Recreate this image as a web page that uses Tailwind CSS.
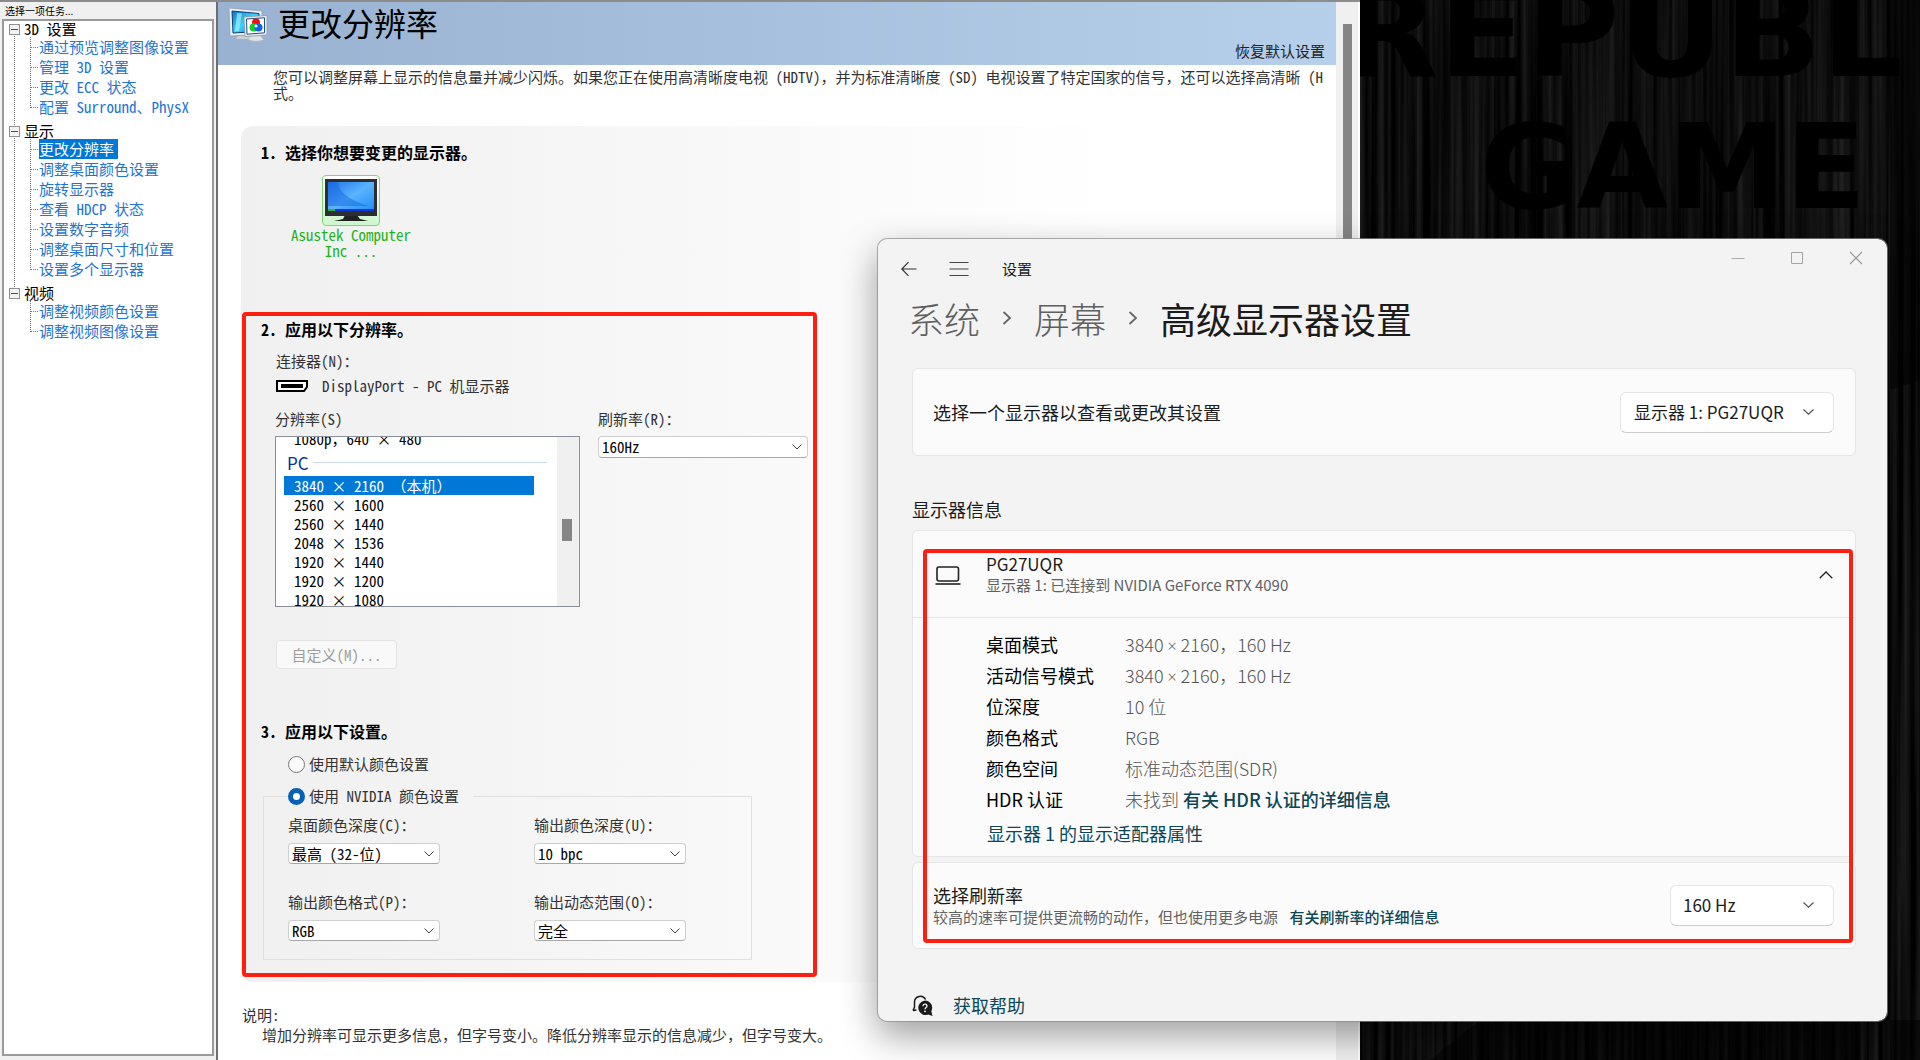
<!DOCTYPE html>
<html lang="zh-CN">
  <head>
    <meta charset="UTF-8" />
    <meta name="viewport" content="width=device-width, initial-scale=1.0" />
    <title>更改分辨率</title>
    <script src="https://cdn.jsdelivr.net/npm/@tailwindcss/browser@4"></script>
  </head>
  <body class="relative h-screen overflow-hidden bg-black font-['Noto_Sans_CJK_SC',sans-serif]">
    <!-- wallpaper -->
    <div class="absolute inset-y-0 right-0 w-[560px] overflow-hidden">
      <svg class="absolute inset-0 h-full w-full" aria-hidden="true">
        <filter id="streaks" x="0" y="0" width="100%" height="100%" color-interpolation-filters="sRGB">
          <feTurbulence type="fractalNoise" baseFrequency="0.16 0.002" numOctaves="3" seed="4" />
          <feColorMatrix values="0.22 0 0 0 -0.058  0.22 0 0 0 -0.058  0.22 0 0 0 -0.058  0 0 0 0 1" />
        </filter>
        <rect width="100%" height="100%" filter="url(#streaks)" />
        <path d="M530 0h30v1060h-30zM560 380 500 400V1060H560ZM70 1060 120 1020H560V1060Z" fill="#000" fill-opacity=".5" />
      </svg>
      <div class="absolute -top-8 -left-5 font-['DejaVu_Sans',sans-serif] text-[128px] leading-[128px] font-bold whitespace-nowrap text-black">REPUBL</div>
      <div class="absolute top-[108px] left-[120px] font-['DejaVu_Sans',sans-serif] text-[118px] leading-[118px] font-bold whitespace-nowrap text-black">GAME</div>
    </div>

    <!-- NVIDIA control panel -->
    <div class="absolute inset-y-0 right-[560px] left-0 flex overflow-hidden border-t-2 border-[#8c8c8c] bg-[#f0f0f0] font-['Noto_Sans_Mono_CJK_SC','Noto_Sans_CJK_SC',monospace] text-[15px] text-[#333]">
      <nav class="flex w-[216px] shrink-0 flex-col pr-[2px] pb-1 pl-[2px]">
        <h2 class="pl-[3px] font-['Noto_Sans_CJK_SC',sans-serif] text-[10px] leading-[17px] text-black">选择一项任务...</h2>
        <div class="relative flex grow flex-col gap-1.5 border-2 border-[#9a9a9a] bg-white leading-5 text-[#1f74d4]">
          <div class="absolute top-3 left-[10px] h-[264px] border-l border-dotted border-[#777]"></div>
          <section>
            <h3 class="relative flex h-4 items-center pl-[5px] text-black"><span class="mr-1 flex size-[11px] items-center justify-center border border-[#919191] bg-[#f4f4f4]"><i class="h-px w-[7px] bg-[#2b4f9e]"></i></span>3D 设置</h3>
            <ul class="relative ml-[26px] before:absolute before:top-0 before:bottom-[9px] before:left-0 before:border-l before:border-dotted before:border-[#777]">
              <li class="flex h-5 items-center"><i class="mr-px w-2 border-t border-dotted border-[#777]"></i><a href="#">通过预览调整图像设置</a></li>
              <li class="flex h-5 items-center"><i class="mr-px w-2 border-t border-dotted border-[#777]"></i><a href="#">管理 3D 设置</a></li>
              <li class="flex h-5 items-center"><i class="mr-px w-2 border-t border-dotted border-[#777]"></i><a href="#">更改 ECC 状态</a></li>
              <li class="flex h-5 items-center"><i class="mr-px w-2 border-t border-dotted border-[#777]"></i><a href="#" class="whitespace-nowrap">配置 Surround、PhysX</a></li>
            </ul>
          </section>
          <section>
            <h3 class="relative flex h-4 items-center pl-[5px] text-black"><span class="mr-1 flex size-[11px] items-center justify-center border border-[#919191] bg-[#f4f4f4]"><i class="h-px w-[7px] bg-[#2b4f9e]"></i></span>显示</h3>
            <ul class="relative ml-[26px] before:absolute before:top-0 before:bottom-[9px] before:left-0 before:border-l before:border-dotted before:border-[#777]">
              <li class="flex h-5 items-center"><i class="mr-px w-2 border-t border-dotted border-[#777]"></i><a href="#" class="bg-[#0078d7] pr-1 text-white">更改分辨率</a></li>
              <li class="flex h-5 items-center"><i class="mr-px w-2 border-t border-dotted border-[#777]"></i><a href="#">调整桌面颜色设置</a></li>
              <li class="flex h-5 items-center"><i class="mr-px w-2 border-t border-dotted border-[#777]"></i><a href="#">旋转显示器</a></li>
              <li class="flex h-5 items-center"><i class="mr-px w-2 border-t border-dotted border-[#777]"></i><a href="#">查看 HDCP 状态</a></li>
              <li class="flex h-5 items-center"><i class="mr-px w-2 border-t border-dotted border-[#777]"></i><a href="#">设置数字音频</a></li>
              <li class="flex h-5 items-center"><i class="mr-px w-2 border-t border-dotted border-[#777]"></i><a href="#">调整桌面尺寸和位置</a></li>
              <li class="flex h-5 items-center"><i class="mr-px w-2 border-t border-dotted border-[#777]"></i><a href="#">设置多个显示器</a></li>
            </ul>
          </section>
          <section>
            <h3 class="relative flex h-4 items-center pl-[5px] text-black"><span class="mr-1 flex size-[11px] items-center justify-center border border-[#919191] bg-[#f4f4f4]"><i class="h-px w-[7px] bg-[#2b4f9e]"></i></span>视频</h3>
            <ul class="relative ml-[26px] before:absolute before:top-0 before:bottom-[9px] before:left-0 before:border-l before:border-dotted before:border-[#777]">
              <li class="flex h-5 items-center"><i class="mr-px w-2 border-t border-dotted border-[#777]"></i><a href="#">调整视频颜色设置</a></li>
              <li class="flex h-5 items-center"><i class="mr-px w-2 border-t border-dotted border-[#777]"></i><a href="#">调整视频图像设置</a></li>
            </ul>
          </section>
        </div>
      </nav>

      <main class="min-w-0 grow overflow-hidden border-l-2 border-[#6e6e6e] bg-white">
        <header class="flex h-[63px] bg-linear-to-r from-[#99b2d1] to-[#b6cfea] pr-[11px] pl-[10px]">
          <svg class="mt-1.5 h-[34px] w-10 shrink-0" viewBox="0 0 40 34" aria-hidden="true">
            <defs>
              <linearGradient id="screen" x1="0" y1="0" x2="1" y2="1"><stop offset="0" stop-color="#0a6fc8" /><stop offset=".5" stop-color="#3fd2f8" /><stop offset="1" stop-color="#0a7ad6" /></linearGradient>
            </defs>
            <path d="M10 28h12l2 3H8z" fill="#c9d0d6" />
            <path d="M1 0 34 3v23L2 28z" fill="#eef2f5" stroke="#8d99a5" stroke-width=".7" />
            <path d="M4 3 31 5.500v18L5 25z" fill="url(#screen)" stroke="#0b3d78" />
            <path d="M9 5 14 5.500 11 23l-4 .5z" fill="#9ff1ff" fill-opacity=".7" />
            <path d="m22 28 10-1 4 5q-8 3-16 0z" fill="#dfe3e6" stroke="#9aa" stroke-width=".5" />
            <path d="M16 9 39 7.500V27l-22 1.500z" fill="#e9edf0" stroke="#8792a0" stroke-width=".7" />
            <path d="M18.500 11 36.500 9.800v15l-17.500 1.400z" fill="#fff" stroke="#214f86" />
            <circle cx="28" cy="14.500" r="4" fill="#f01010" />
            <circle cx="25.500" cy="19.500" r="4" fill="#10d020" />
            <circle cx="30.500" cy="19.500" r="4" fill="#1560e8" />
            <circle cx="28" cy="18" r="1.500" fill="#fff" />
          </svg>
          <h1 class="ml-2.5 self-start text-[32px] leading-10 text-black">更改分辨率</h1>
          <button class="mb-1 ml-auto self-end leading-5 text-[#222]">恢复默认设置</button>
        </header>

        <p class="mt-1 pl-[55px] leading-4 whitespace-nowrap">您可以调整屏幕上显示的信息量并减少闪烁。如果您正在使用高清晰度电视 (HDTV)，并为标准清晰度 (SD) 电视设置了特定国家的信号，还可以选择高清晰 (H<br />式。</p>

        <div class="mt-[25px] ml-[23px] rounded-l-xl bg-linear-to-r from-[#f0f0f0] to-white to-80% pt-3.5 pb-[5px]">
          <h2 class="pl-5 text-base leading-6 font-bold text-black">1. 选择你想要变更的显示器。</h2>
          <button class="mt-[11px] ml-[49px] flex w-[122px] flex-col items-center leading-4 text-[#1cb41c]">
            <svg class="h-[51px] w-[58px] rounded-sm border border-[#7fd67a] bg-linear-to-b from-white to-[#ccf7cc]" viewBox="0 0 56 49" aria-hidden="true">
              <defs>
                <linearGradient id="desk" x1="0" y1="0" x2="1" y2="1"><stop offset="0" stop-color="#1f6fe8" /><stop offset=".5" stop-color="#5ab4ff" /><stop offset="1" stop-color="#1c8cf5" /></linearGradient>
              </defs>
              <path d="M22 39h12l3 4 8 2H11l9-2z" fill="#222" />
              <rect x="2" y="3" width="52" height="37" fill="#2b2e33" />
              <rect x="5" y="6" width="46" height="29" fill="url(#desk)" />
              <path d="M5 6h10q0 14 30 24H5z" fill="#1465dd" fill-opacity=".5" />
              <path d="M5 33h46v2H5z" fill="#1436d8" /><path d="M5 33h7v2H5z" fill="#2cb52c" />
            </svg>
            <span class="mt-px">Asustek Computer<br />Inc ...</span>
          </button>

          <div class="mt-[53px] ml-px w-[575px] rounded-sm border-4 border-[#ff1f10] pt-px pb-[13px]">
            <h2 class="pl-[15px] text-base leading-6 font-bold text-black">2. 应用以下分辨率。</h2>
            <div class="mt-2.5 pl-[30px] leading-5">连接器(N)：</div>
            <div class="mt-[5px] flex items-center pl-[30px] leading-5">
              <svg class="h-3 w-8" viewBox="0 0 32 12" aria-hidden="true">
                <path d="M1 1h30v6l-3 4H1z" fill="#fff" stroke="#000" stroke-width="2" /><path d="M5 4h22v4H5z" />
              </svg>
              <span class="ml-3.5">DisplayPort - PC 机显示器</span>
            </div>

            <div class="mt-[13px] flex items-start pr-[5px] pl-[29px]">
              <div class="w-[305px]">
                <div id="res-label" class="leading-5">分辨率(S)</div>
                <div class="mt-[7px] flex h-[171px] overflow-hidden border border-[#8b8f9a] bg-white text-black">
                  <ul role="listbox" aria-labelledby="res-label" class="-mt-2 grow pl-2 leading-[19px]">
                    <li class="pl-2.5">1080p，640 × 480</li>
                    <li class="mr-2.5 flex h-7 items-center gap-1 pl-[3px] font-['Noto_Sans_CJK_SC',sans-serif] text-[17px] text-[#003399]">PC<i class="h-px grow bg-[#cbd8ee]"></i></li>
                    <li role="option" aria-selected="true" class="mr-[23px] bg-[#0078d7] pl-2.5 text-white">3840 × 2160 （本机）</li>
                    <li role="option" class="pl-2.5">2560 × 1600</li>
                    <li role="option" class="pl-2.5">2560 × 1440</li>
                    <li role="option" class="pl-2.5">2048 × 1536</li>
                    <li role="option" class="pl-2.5">1920 × 1440</li>
                    <li role="option" class="pl-2.5">1920 × 1200</li>
                    <li role="option" class="pl-2.5">1920 × 1080</li>
                  </ul>
                  <div class="w-[22px] bg-[#f0f0f0] pt-[82px] pl-[5px]"><i class="block h-[22px] w-2.5 bg-[#868686]"></i></div>
                </div>
              </div>
              <div class="ml-[18px] grow">
                <label for="hz" class="block leading-5">刷新率(R)：</label>
                <div class="relative mt-[7px]">
                  <select id="hz" class="h-[22px] w-full appearance-none rounded-sm border border-[#cfcfcf] border-b-[#a8a8a8] bg-white pl-[3px] leading-5 text-black"><option>160Hz</option></select>
                  <svg class="pointer-events-none absolute top-2 right-1.5 h-1.5 w-2.5" viewBox="0 0 10 6" fill="none" stroke="#444" aria-hidden="true"><path d="m.5.5 4.500 4.500L9.500.5" /></svg>
                </div>
              </div>
            </div>

            <button disabled class="mt-[33px] ml-[30px] h-[29px] w-[121px] rounded border border-[#e4e4e4] bg-[#f9f9f9] leading-5 text-[#9d9d9d]">自定义(M)...</button>

            <h2 class="mt-[50px] pl-[15px] text-base leading-6 font-bold text-black">3. 应用以下设置。</h2>
            <label class="mt-[11px] ml-[42px] flex h-5 items-center gap-1 leading-5">
              <input type="radio" name="color" class="size-[17px] appearance-none rounded-full border border-[#777] bg-[#fafafa]" />使用默认颜色设置
            </label>
            <fieldset class="mt-3 ml-[17px] w-[489px] border border-[#e0e0e0] pb-[18px]">
              <legend class="ml-6 pr-3.5">
                <label class="flex h-5 items-center gap-1 leading-5">
                  <input type="radio" name="color" checked class="size-[17px] appearance-none rounded-full border-5 border-[#0560b6] bg-white" />使用 NVIDIA 颜色设置
                </label>
              </legend>
              <div class="mt-[9px] ml-6 grid grid-cols-[152px_152px] gap-x-[94px] gap-y-7">
                <div>
                  <label for="depth" class="block leading-5">桌面颜色深度(C)：</label>
                  <div class="relative mt-2">
                    <select id="depth" class="block h-[21px] w-full appearance-none rounded-sm border border-[#cfcfcf] border-b-[#a8a8a8] bg-white pl-[3px] leading-[19px] text-black"><option>最高 (32-位)</option></select>
                    <svg class="pointer-events-none absolute top-2 right-1.5 h-1.5 w-2.5" viewBox="0 0 10 6" fill="none" stroke="#444" aria-hidden="true"><path d="m.5.5 4.500 4.500L9.500.5" /></svg>
                  </div>
                </div>
                <div>
                  <label for="out-depth" class="block leading-5">输出颜色深度(U)：</label>
                  <div class="relative mt-2">
                    <select id="out-depth" class="block h-[21px] w-full appearance-none rounded-sm border border-[#cfcfcf] border-b-[#a8a8a8] bg-white pl-[3px] leading-[19px] text-black"><option>10 bpc</option></select>
                    <svg class="pointer-events-none absolute top-2 right-1.5 h-1.5 w-2.5" viewBox="0 0 10 6" fill="none" stroke="#444" aria-hidden="true"><path d="m.5.5 4.500 4.500L9.500.5" /></svg>
                  </div>
                </div>
                <div>
                  <label for="format" class="block leading-5">输出颜色格式(P)：</label>
                  <div class="relative mt-2">
                    <select id="format" class="block h-[21px] w-full appearance-none rounded-sm border border-[#cfcfcf] border-b-[#a8a8a8] bg-white pl-[3px] leading-[19px] text-black"><option>RGB</option></select>
                    <svg class="pointer-events-none absolute top-2 right-1.5 h-1.5 w-2.5" viewBox="0 0 10 6" fill="none" stroke="#444" aria-hidden="true"><path d="m.5.5 4.500 4.500L9.500.5" /></svg>
                  </div>
                </div>
                <div>
                  <label for="range" class="block leading-5">输出动态范围(O)：</label>
                  <div class="relative mt-2">
                    <select id="range" class="block h-[21px] w-full appearance-none rounded-sm border border-[#cfcfcf] border-b-[#a8a8a8] bg-white pl-[3px] leading-[19px] text-black"><option>完全</option></select>
                    <svg class="pointer-events-none absolute top-2 right-1.5 h-1.5 w-2.5" viewBox="0 0 10 6" fill="none" stroke="#444" aria-hidden="true"><path d="m.5.5 4.500 4.500L9.500.5" /></svg>
                  </div>
                </div>
              </div>
            </fieldset>
          </div>
        </div>

        <div class="mt-[23px] pl-6 leading-5">
          <div>说明:</div>
          <p class="pl-5">增加分辨率可显示更多信息，但字号变小。降低分辨率显示的信息减少，但字号变大。</p>
        </div>
      </main>
      <div class="flex w-6 shrink-0 justify-center border-r-2 border-white bg-[#f0f0f0] pt-[22px]"><i class="h-[620px] w-[9px] bg-[#858585]"></i></div>
    </div>

    <!-- Windows settings -->
    <div class="absolute top-[238px] right-[32px] left-[877px] rounded-[10px] border border-[#8a8a8a]/70 bg-[#f3f3f3] bg-clip-padding pr-[31px] pb-1 pl-[34px] text-lg text-[#1b1b1b] shadow-[0_14px_36px_rgba(0,0,0,0.38)]">
      <header class="flex h-[60px] items-center">
        <button aria-label="返回" class="-ml-[11px]"><svg class="size-4" viewBox="0 0 16 16" fill="none" stroke="#333" stroke-width="1.200"><path d="M15.500 8H1M7.500 1.200.8 8l6.700 6.800" /></svg></button>
        <button aria-label="菜单" class="ml-8"><svg class="h-4 w-5" viewBox="0 0 20 16" fill="none" stroke="#444" stroke-width="1.200"><path d="M.5 1.500h19M.5 8h19M.5 14.500h19" /></svg></button>
        <span class="ml-[33px] text-[15px] leading-5">设置</span>
        <div class="-mr-[7px] ml-auto flex h-[38px] items-center gap-[45px] self-start">
          <button aria-label="最小化"><svg class="size-3.5" viewBox="0 0 14 14" stroke="#aaa"><path d="M.5 7.500h13" /></svg></button>
          <button aria-label="最大化"><svg class="size-3.5" viewBox="0 0 14 14" fill="none" stroke="#a4a4a4"><path d="M1.500 1.500h11v11h-11z" /></svg></button>
          <button aria-label="关闭"><svg class="size-3.5" viewBox="0 0 14 14" fill="none" stroke="#999" stroke-width="1.200"><path d="m1 1 12 12M13 1 1 13" /></svg></button>
        </div>
      </header>

      <h1 class="flex items-center text-4xl leading-[38px] font-light">
        <a href="#" class="-ml-1 text-[#5f5f5f]">系统</a>
        <svg class="mx-[22px] h-4 w-2.5" viewBox="0 0 10 16" fill="none" stroke="#666" stroke-width="1.800" aria-hidden="true"><path d="m1.500 2 6.500 6-6.500 6" /></svg>
        <a href="#" class="text-[#5f5f5f]">屏幕</a>
        <svg class="mx-[22px] h-4 w-2.5" viewBox="0 0 10 16" fill="none" stroke="#666" stroke-width="1.800" aria-hidden="true"><path d="m1.500 2 6.500 6-6.500 6" /></svg>
        <span class="font-normal">高级显示器设置</span>
      </h1>

      <div class="mt-[31px] flex h-[88px] items-center justify-between rounded-md border border-[#e5e5e5] bg-[#fbfbfb] pr-[21px] pl-5">
        <label for="monitor" class="leading-6">选择一个显示器以查看或更改其设置</label>
        <div class="relative w-[214px]">
          <select id="monitor" class="block h-[41px] w-full appearance-none rounded-md border border-[#e6e6e6] border-b-[#cccccc] bg-white pl-[13px] text-[17px]"><option>显示器 1: PG27UQR</option></select>
          <svg class="pointer-events-none absolute top-[17px] right-5 h-1.5 w-[11px]" viewBox="0 0 11 6" fill="none" stroke="#555" stroke-width="1.200" aria-hidden="true"><path d="m.5.5 5 4.700 5-4.700" /></svg>
        </div>
      </div>

      <h2 class="mt-[41px] leading-6">显示器信息</h2>
      <div class="relative mt-[9px]">
        <section class="rounded-md border border-[#e5e5e5] bg-[#fbfbfb] pb-2">
          <div class="flex h-[87px] items-center border-b border-[#e5e5e5] px-[22px] pt-0.5">
            <svg class="h-[19px] w-[26px]" viewBox="0 0 26 19" fill="none" stroke="#222" stroke-width="1.600" aria-hidden="true"><rect x="2" y="1" width="21.500" height="14" rx="2" /><path d="M.5 18h25" /></svg>
            <div class="ml-[25px]">
              <div class="text-[17px] leading-5">PG27UQR</div>
              <div class="text-[15px] leading-[22px] text-[#626262]">显示器 1: 已连接到 NVIDIA GeForce RTX 4090</div>
            </div>
            <button aria-label="折叠" class="ml-auto"><svg class="h-2 w-3.5" viewBox="0 0 14 8" fill="none" stroke="#222" stroke-width="1.300"><path d="M.7 7.300 7 1l6.300 6.300" /></svg></button>
          </div>
          <dl class="grid grid-cols-[139px_1fr] pt-[11px] pl-[73px] leading-[31px]">
            <dt class="text-black">桌面模式</dt>
            <dd class="font-light text-[#555]">3840 <span class="font-['Open_Sans',sans-serif] text-base">×</span> 2160，160 Hz</dd>
            <dt class="text-black">活动信号模式</dt>
            <dd class="font-light text-[#555]">3840 <span class="font-['Open_Sans',sans-serif] text-base">×</span> 2160，160 Hz</dd>
            <dt class="text-black">位深度</dt>
            <dd class="font-light text-[#555]">10 位</dd>
            <dt class="text-black">颜色格式</dt>
            <dd class="font-light text-[#555]">RGB</dd>
            <dt class="text-black">颜色空间</dt>
            <dd class="font-light text-[#555]">标准动态范围(SDR)</dd>
            <dt class="text-black">HDR 认证</dt>
            <dd class="font-light text-[#555]">未找到 <a href="#" class="font-medium text-[#0d4656]">有关 HDR 认证的详细信息</a></dd>
          </dl>
          <a href="#" class="mt-[3px] ml-[74px] block w-fit leading-[30px] text-[#0d4656]">显示器 1 的显示适配器属性</a>
        </section>
        <section class="mt-[5px] flex h-[87px] items-center justify-between rounded-md border border-[#e5e5e5] bg-[#fbfbfb] pr-[21px] pl-5">
          <div class="pt-px">
            <label for="rate" class="block leading-[21px]">选择刷新率</label>
            <div class="text-[15px] leading-[22px] text-[#626262]">较高的速率可提供更流畅的动作，但也使用更多电源 <a href="#" class="ml-2 font-medium text-[#0d4656]">有关刷新率的详细信息</a></div>
          </div>
          <div class="relative w-[164px]">
            <select id="rate" class="block h-[41px] w-full appearance-none rounded-md border border-[#e6e6e6] border-b-[#cccccc] bg-white pl-3 text-[17px]"><option>160 Hz</option></select>
            <svg class="pointer-events-none absolute top-[17px] right-5 h-1.5 w-[11px]" viewBox="0 0 11 6" fill="none" stroke="#555" stroke-width="1.200" aria-hidden="true"><path d="m.5.5 5 4.700 5-4.700" /></svg>
          </div>
        </section>
        <div class="pointer-events-none absolute top-[19px] right-[3px] bottom-1.5 left-[11px] rounded-sm border-4 border-[#ff1f10]"></div>
      </div>

      <a href="#" class="mt-11 flex h-6 w-fit items-center text-[#0d4656]">
        <svg class="mr-5 size-[21px]" viewBox="0 0 21 21" aria-hidden="true">
          <path d="M1 15.500 2.500 12V7a5.800 5.800 0 0 1 11-2.500M1 15.500l3.500-.5" fill="none" stroke="#1b1b1b" stroke-width="1.500" />
          <path d="M13 5.500a7.300 7.300 0 0 1 6.300 10.800L20.500 21l-4.300-1.400A7.300 7.300 0 1 1 13 5.500Z" fill="#1b1b1b" />
          <path d="M10.900 11.200q.2-2 2.100-2t2 1.700q0 1-1.200 1.800-.7.500-.7 1.500" fill="none" stroke="#fff" stroke-width="1.300" /><circle cx="13" cy="16.300" r=".9" fill="#fff" />
        </svg>
        获取帮助
      </a>
    </div>
  </body>
</html>
